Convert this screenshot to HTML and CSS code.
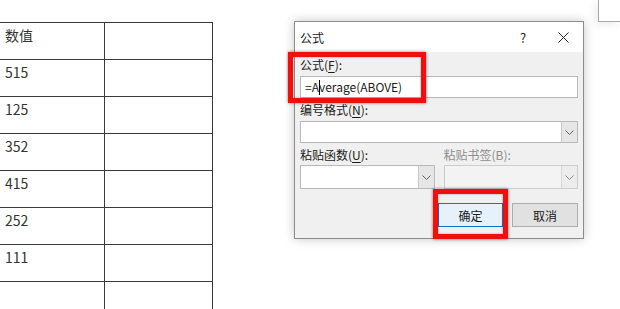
FILE: index.html
```html
<!DOCTYPE html>
<html lang="zh-CN">
<head>
  <meta charset="UTF-8" />
  <title>公式</title>
  <link rel="stylesheet" href="styles.css">
</head>
<body>
  <div class="sheet">
    <div class="cell">数值</div><div class="cell"></div>
    <div class="cell">515</div><div class="cell"></div>
    <div class="cell">125</div><div class="cell"></div>
    <div class="cell">352</div><div class="cell"></div>
    <div class="cell">415</div><div class="cell"></div>
    <div class="cell">252</div><div class="cell"></div>
    <div class="cell">111</div><div class="cell"></div>
    <div class="cell"></div><div class="cell"></div>
  </div>

  <div class="dialog">
    <div class="titlebar">
      <span class="title">公式</span>
      <span class="help">?</span>
      <span class="close">
        <svg width="11" height="11" viewBox="0 0 11 11"><path d="M0.5 0.5 L10.5 10.5 M10.5 0.5 L0.5 10.5" stroke="#222" stroke-width="1"/></svg>
      </span>
    </div>
    <div class="dialog-body">
      <div class="label">公式(<u>F</u>):</div>
      <div class="field">=A<span class="caret"></span>verage(ABOVE)</div>

      <div class="label">编号格式(<u>N</u>):</div>
      <div class="combo">
        <div class="combo-text"></div>
        <div class="combo-btn">
          <svg width="9" height="5" viewBox="0 0 9 5"><path d="M0.5 0.5 L4.5 4.5 L8.5 0.5" fill="none" stroke="#606060" stroke-width="1"/></svg>
        </div>
      </div>

      <div class="pair">
        <div class="pair-col">
          <div class="label">粘贴函数(<u>U</u>):</div>
          <div class="combo tall">
            <div class="combo-text"></div>
            <div class="combo-btn">
              <svg width="9" height="5" viewBox="0 0 9 5"><path d="M0.5 0.5 L4.5 4.5 L8.5 0.5" fill="none" stroke="#606060" stroke-width="1"/></svg>
            </div>
          </div>
        </div>
        <div class="pair-col">
          <div class="label disabled">粘贴书签(B):</div>
          <div class="combo tall off">
            <div class="combo-text"></div>
            <div class="combo-btn">
              <svg width="9" height="5" viewBox="0 0 9 5"><path d="M0.5 0.5 L4.5 4.5 L8.5 0.5" fill="none" stroke="#8a8a8a" stroke-width="1"/></svg>
            </div>
          </div>
        </div>
      </div>

      <div class="buttons">
        <button class="btn primary">确定</button>
        <button class="btn">取消</button>
      </div>
    </div>

    <!-- red highlight marks -->
    <div class="mark mark-formula"></div>
    <div class="mark mark-ok"></div>
  </div>

  <div class="page-corner"></div>
</body>
</html>
```

FILE: styles.css
```css
* { box-sizing: border-box; }
body {
  margin: 0;
  width: 620px;
  height: 309px;
  overflow: hidden;
  background: #ffffff;
  font-family: "Noto Sans CJK SC", "Noto Sans", sans-serif;
  display: flex;
  align-items: flex-start;
  position: relative;
}

/* document table */
.sheet {
  margin-top: 22px;
  display: grid;
  grid-template-columns: 105px 108px;
  grid-auto-rows: 37px;
}
.cell {
  border-top: 1px solid #3a3a3a;
  border-right: 1px solid #3a3a3a;
  padding: 2px 5px;
  font-size: 14px;
  line-height: 20px;
  color: #333;
}

/* dialog window */
.dialog {
  position: relative;
  margin-top: 21px;
  margin-left: 81px;
  width: 290px;
  height: 218px;
  border: 1px solid #8c8c8c;
  background: #f0f0f0;
  box-shadow: 0 0 10px rgba(0,0,0,0.22);
  font-size: 12px;
  color: #1a1a1a;
}
.titlebar {
  height: 30px;
  background: #fff;
  display: flex;
  align-items: center;
  padding-left: 5px;
}
.title { flex: 1; font-size: 12px; }
.help { width: 40px; text-align: center; font-size: 13px; }
.close {
  width: 40px;
  display: flex;
  justify-content: center;
  align-items: center;
}

.dialog-body { padding: 5px 5px 0; }
.label {
  height: 16px;
  line-height: 16px;
  margin-bottom: 3px;
}
.label u { text-decoration-thickness: 1px; text-underline-offset: 2px; }
.label.disabled { color: #8d8d8d; }

.field {
  height: 22px;
  background: #fff;
  border: 1px solid #b9b9b9;
  padding-left: 4px;
  line-height: 20px;
  font-size: 12px;
  margin-bottom: 4px;
}
.caret {
  display: inline-block;
  width: 1px;
  height: 15px;
  margin-right: -1px;
  background: #000;
  vertical-align: -3px;
}

.combo {
  display: flex;
  height: 22px;
  background: #fff;
  border: 1px solid #b9b9b9;
  margin-bottom: 4px;
}
.combo.tall { height: 24px; margin-top: 2px; }
.combo-text { flex: 1; }
.combo-btn {
  width: 16px;
  background: #e6e6e6;
  border-left: 1px solid #c8c8c8;
  display: flex;
  align-items: center;
  justify-content: center;
}
.combo.off { background: #f3f3f3; border-color: #cdcdcd; }
.combo.off .combo-btn { background: #ececec; border-left-color: #d6d6d6; }

.pair { display: flex; gap: 9px; }
.pair-col { flex: 1; }
.pair-col .label { margin-bottom: 0; }

.buttons {
  display: flex;
  justify-content: flex-end;
  gap: 9px;
  margin-top: 10px;
}
.btn {
  width: 66px;
  height: 24px;
  border: 1px solid #adadad;
  background: #e1e1e1;
  font-family: inherit;
  font-size: 12px;
  color: #1a1a1a;
  padding: 0;
}
.btn.primary {
  width: 65px;
  border-color: #0078d7;
  background: #e5f1fb;
}

/* red highlights */
.mark {
  position: absolute;
  border: 5px solid #f00f0f;
  box-shadow: 0 0 3px rgba(60,0,0,0.55), inset 0 0 2px rgba(60,0,0,0.45);
}
.mark-formula { left: -7px; top: 30px; width: 138px; height: 51px; }
.mark-ok { left: 138px; top: 167px; width: 75px; height: 50px; }

.page-corner {
  position: absolute;
  right: 0;
  top: 0;
  width: 22px;
  height: 22px;
  border-left: 1px solid #a8a8a8;
  border-bottom: 1px solid #a8a8a8;
  background: #fff;
  box-shadow: -3px 3px 8px rgba(0,0,0,0.08);
}
```
